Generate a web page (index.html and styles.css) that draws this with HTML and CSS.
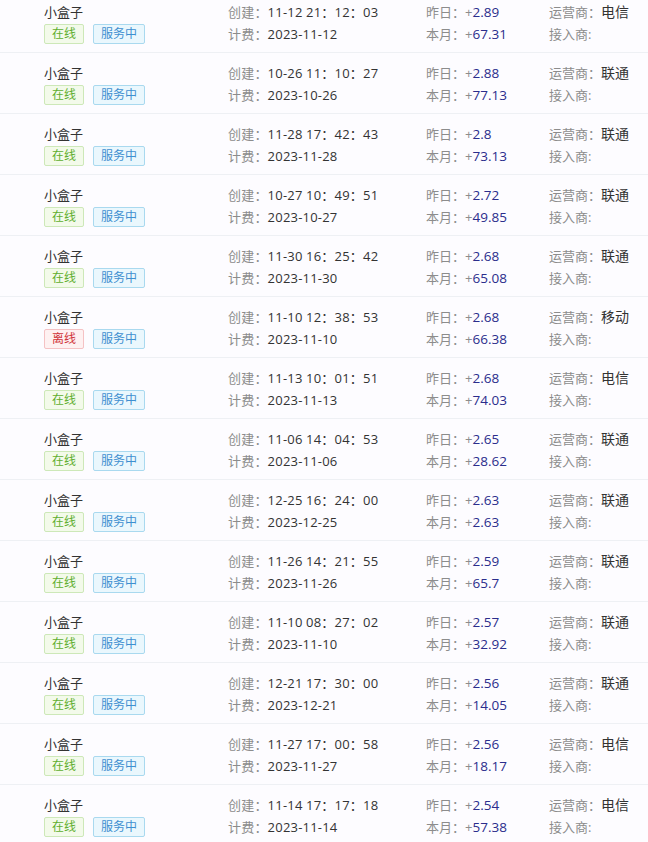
FILE: index.html
```html
<!DOCTYPE html>
<html lang="zh-CN">
<head>
  <meta charset="UTF-8"/>
  <meta name="viewport" content="width=device-width, initial-scale=1.0"/>
  <title>设备列表</title>
  <link rel="stylesheet" href="styles.css">
</head>
<body>
  <div class="list">
    <div class="row">
      <div class="col name"><div class="line">小盒子</div><div class="line tags"><span class="tag on">在线</span><span class="tag svc">服务中</span></div></div>
      <div class="col time"><div class="line"><span class="lb">创建：</span>11-12 21：12：03</div><div class="line"><span class="lb">计费：</span>2023-11-12</div></div>
      <div class="col money"><div class="line"><span class="lb">昨日：+</span><b>2.89</b></div><div class="line"><span class="lb">本月：+</span><b>67.31</b></div></div>
      <div class="col isp"><div class="line"><span class="lb">运营商：</span><span class="v">电信</span></div><div class="line"><span class="lb">接入商:</span></div></div>
    </div>
    <div class="row">
      <div class="col name"><div class="line">小盒子</div><div class="line tags"><span class="tag on">在线</span><span class="tag svc">服务中</span></div></div>
      <div class="col time"><div class="line"><span class="lb">创建：</span>10-26 11：10：27</div><div class="line"><span class="lb">计费：</span>2023-10-26</div></div>
      <div class="col money"><div class="line"><span class="lb">昨日：+</span><b>2.88</b></div><div class="line"><span class="lb">本月：+</span><b>77.13</b></div></div>
      <div class="col isp"><div class="line"><span class="lb">运营商：</span><span class="v">联通</span></div><div class="line"><span class="lb">接入商:</span></div></div>
    </div>
    <div class="row">
      <div class="col name"><div class="line">小盒子</div><div class="line tags"><span class="tag on">在线</span><span class="tag svc">服务中</span></div></div>
      <div class="col time"><div class="line"><span class="lb">创建：</span>11-28 17：42：43</div><div class="line"><span class="lb">计费：</span>2023-11-28</div></div>
      <div class="col money"><div class="line"><span class="lb">昨日：+</span><b>2.8</b></div><div class="line"><span class="lb">本月：+</span><b>73.13</b></div></div>
      <div class="col isp"><div class="line"><span class="lb">运营商：</span><span class="v">联通</span></div><div class="line"><span class="lb">接入商:</span></div></div>
    </div>
    <div class="row">
      <div class="col name"><div class="line">小盒子</div><div class="line tags"><span class="tag on">在线</span><span class="tag svc">服务中</span></div></div>
      <div class="col time"><div class="line"><span class="lb">创建：</span>10-27 10：49：51</div><div class="line"><span class="lb">计费：</span>2023-10-27</div></div>
      <div class="col money"><div class="line"><span class="lb">昨日：+</span><b>2.72</b></div><div class="line"><span class="lb">本月：+</span><b>49.85</b></div></div>
      <div class="col isp"><div class="line"><span class="lb">运营商：</span><span class="v">联通</span></div><div class="line"><span class="lb">接入商:</span></div></div>
    </div>
    <div class="row">
      <div class="col name"><div class="line">小盒子</div><div class="line tags"><span class="tag on">在线</span><span class="tag svc">服务中</span></div></div>
      <div class="col time"><div class="line"><span class="lb">创建：</span>11-30 16：25：42</div><div class="line"><span class="lb">计费：</span>2023-11-30</div></div>
      <div class="col money"><div class="line"><span class="lb">昨日：+</span><b>2.68</b></div><div class="line"><span class="lb">本月：+</span><b>65.08</b></div></div>
      <div class="col isp"><div class="line"><span class="lb">运营商：</span><span class="v">联通</span></div><div class="line"><span class="lb">接入商:</span></div></div>
    </div>
    <div class="row">
      <div class="col name"><div class="line">小盒子</div><div class="line tags"><span class="tag off">离线</span><span class="tag svc">服务中</span></div></div>
      <div class="col time"><div class="line"><span class="lb">创建：</span>11-10 12：38：53</div><div class="line"><span class="lb">计费：</span>2023-11-10</div></div>
      <div class="col money"><div class="line"><span class="lb">昨日：+</span><b>2.68</b></div><div class="line"><span class="lb">本月：+</span><b>66.38</b></div></div>
      <div class="col isp"><div class="line"><span class="lb">运营商：</span><span class="v">移动</span></div><div class="line"><span class="lb">接入商:</span></div></div>
    </div>
    <div class="row">
      <div class="col name"><div class="line">小盒子</div><div class="line tags"><span class="tag on">在线</span><span class="tag svc">服务中</span></div></div>
      <div class="col time"><div class="line"><span class="lb">创建：</span>11-13 10：01：51</div><div class="line"><span class="lb">计费：</span>2023-11-13</div></div>
      <div class="col money"><div class="line"><span class="lb">昨日：+</span><b>2.68</b></div><div class="line"><span class="lb">本月：+</span><b>74.03</b></div></div>
      <div class="col isp"><div class="line"><span class="lb">运营商：</span><span class="v">电信</span></div><div class="line"><span class="lb">接入商:</span></div></div>
    </div>
    <div class="row">
      <div class="col name"><div class="line">小盒子</div><div class="line tags"><span class="tag on">在线</span><span class="tag svc">服务中</span></div></div>
      <div class="col time"><div class="line"><span class="lb">创建：</span>11-06 14：04：53</div><div class="line"><span class="lb">计费：</span>2023-11-06</div></div>
      <div class="col money"><div class="line"><span class="lb">昨日：+</span><b>2.65</b></div><div class="line"><span class="lb">本月：+</span><b>28.62</b></div></div>
      <div class="col isp"><div class="line"><span class="lb">运营商：</span><span class="v">联通</span></div><div class="line"><span class="lb">接入商:</span></div></div>
    </div>
    <div class="row">
      <div class="col name"><div class="line">小盒子</div><div class="line tags"><span class="tag on">在线</span><span class="tag svc">服务中</span></div></div>
      <div class="col time"><div class="line"><span class="lb">创建：</span>12-25 16：24：00</div><div class="line"><span class="lb">计费：</span>2023-12-25</div></div>
      <div class="col money"><div class="line"><span class="lb">昨日：+</span><b>2.63</b></div><div class="line"><span class="lb">本月：+</span><b>2.63</b></div></div>
      <div class="col isp"><div class="line"><span class="lb">运营商：</span><span class="v">联通</span></div><div class="line"><span class="lb">接入商:</span></div></div>
    </div>
    <div class="row">
      <div class="col name"><div class="line">小盒子</div><div class="line tags"><span class="tag on">在线</span><span class="tag svc">服务中</span></div></div>
      <div class="col time"><div class="line"><span class="lb">创建：</span>11-26 14：21：55</div><div class="line"><span class="lb">计费：</span>2023-11-26</div></div>
      <div class="col money"><div class="line"><span class="lb">昨日：+</span><b>2.59</b></div><div class="line"><span class="lb">本月：+</span><b>65.7</b></div></div>
      <div class="col isp"><div class="line"><span class="lb">运营商：</span><span class="v">联通</span></div><div class="line"><span class="lb">接入商:</span></div></div>
    </div>
    <div class="row">
      <div class="col name"><div class="line">小盒子</div><div class="line tags"><span class="tag on">在线</span><span class="tag svc">服务中</span></div></div>
      <div class="col time"><div class="line"><span class="lb">创建：</span>11-10 08：27：02</div><div class="line"><span class="lb">计费：</span>2023-11-10</div></div>
      <div class="col money"><div class="line"><span class="lb">昨日：+</span><b>2.57</b></div><div class="line"><span class="lb">本月：+</span><b>32.92</b></div></div>
      <div class="col isp"><div class="line"><span class="lb">运营商：</span><span class="v">联通</span></div><div class="line"><span class="lb">接入商:</span></div></div>
    </div>
    <div class="row">
      <div class="col name"><div class="line">小盒子</div><div class="line tags"><span class="tag on">在线</span><span class="tag svc">服务中</span></div></div>
      <div class="col time"><div class="line"><span class="lb">创建：</span>12-21 17：30：00</div><div class="line"><span class="lb">计费：</span>2023-12-21</div></div>
      <div class="col money"><div class="line"><span class="lb">昨日：+</span><b>2.56</b></div><div class="line"><span class="lb">本月：+</span><b>14.05</b></div></div>
      <div class="col isp"><div class="line"><span class="lb">运营商：</span><span class="v">联通</span></div><div class="line"><span class="lb">接入商:</span></div></div>
    </div>
    <div class="row">
      <div class="col name"><div class="line">小盒子</div><div class="line tags"><span class="tag on">在线</span><span class="tag svc">服务中</span></div></div>
      <div class="col time"><div class="line"><span class="lb">创建：</span>11-27 17：00：58</div><div class="line"><span class="lb">计费：</span>2023-11-27</div></div>
      <div class="col money"><div class="line"><span class="lb">昨日：+</span><b>2.56</b></div><div class="line"><span class="lb">本月：+</span><b>18.17</b></div></div>
      <div class="col isp"><div class="line"><span class="lb">运营商：</span><span class="v">电信</span></div><div class="line"><span class="lb">接入商:</span></div></div>
    </div>
    <div class="row">
      <div class="col name"><div class="line">小盒子</div><div class="line tags"><span class="tag on">在线</span><span class="tag svc">服务中</span></div></div>
      <div class="col time"><div class="line"><span class="lb">创建：</span>11-14 17：17：18</div><div class="line"><span class="lb">计费：</span>2023-11-14</div></div>
      <div class="col money"><div class="line"><span class="lb">昨日：+</span><b>2.54</b></div><div class="line"><span class="lb">本月：+</span><b>57.38</b></div></div>
      <div class="col isp"><div class="line"><span class="lb">运营商：</span><span class="v">电信</span></div><div class="line"><span class="lb">接入商:</span></div></div>
    </div>
  </div>
</body>
</html>
```

FILE: styles.css
```css
* { box-sizing: border-box; margin: 0; padding: 0; }
body {
  font-family: 'Open Sans', 'Noto Sans CJK SC', sans-serif;
  font-size: 13px; color: #333;
  background: #fdfcff;
}
.list { margin-top: -8px; }
.row {
  display: flex; height: 61px;
  padding: 9px 0 0 44px;
  border-bottom: 1px solid #eef0f4;
}
.col { flex: none; }
.line { height: 22px; line-height: 22px; white-space: nowrap; }
.name { width: 184px; }
.time { width: 198px; letter-spacing: .2px; }
.money { width: 123px; }
.isp { flex: 1; }
.lb { color: #8c8c8c; }
.money b { font-weight: normal; color: #2b2d8c; font-size: 13.5px; }
.isp .v { color: #333; font-size: 14px; }
.tags { display: flex; align-items: center; gap: 9px; }
.tag {
  display: inline-block; height: 20px; line-height: 18px;
  padding: 0 7px; font-size: 12px; letter-spacing: 0;
  border: 1px solid; border-radius: 2px;
}
.tag.on { color: #5fae2e; background: #f3faea; border-color: #cde8b8; }
.tag.off { color: #d0343a; background: #fef1f1; border-color: #f5c2c4; }
.tag.svc { color: #3f8fd0; background: #eaf7fd; border-color: #a9d9ef; }
```
